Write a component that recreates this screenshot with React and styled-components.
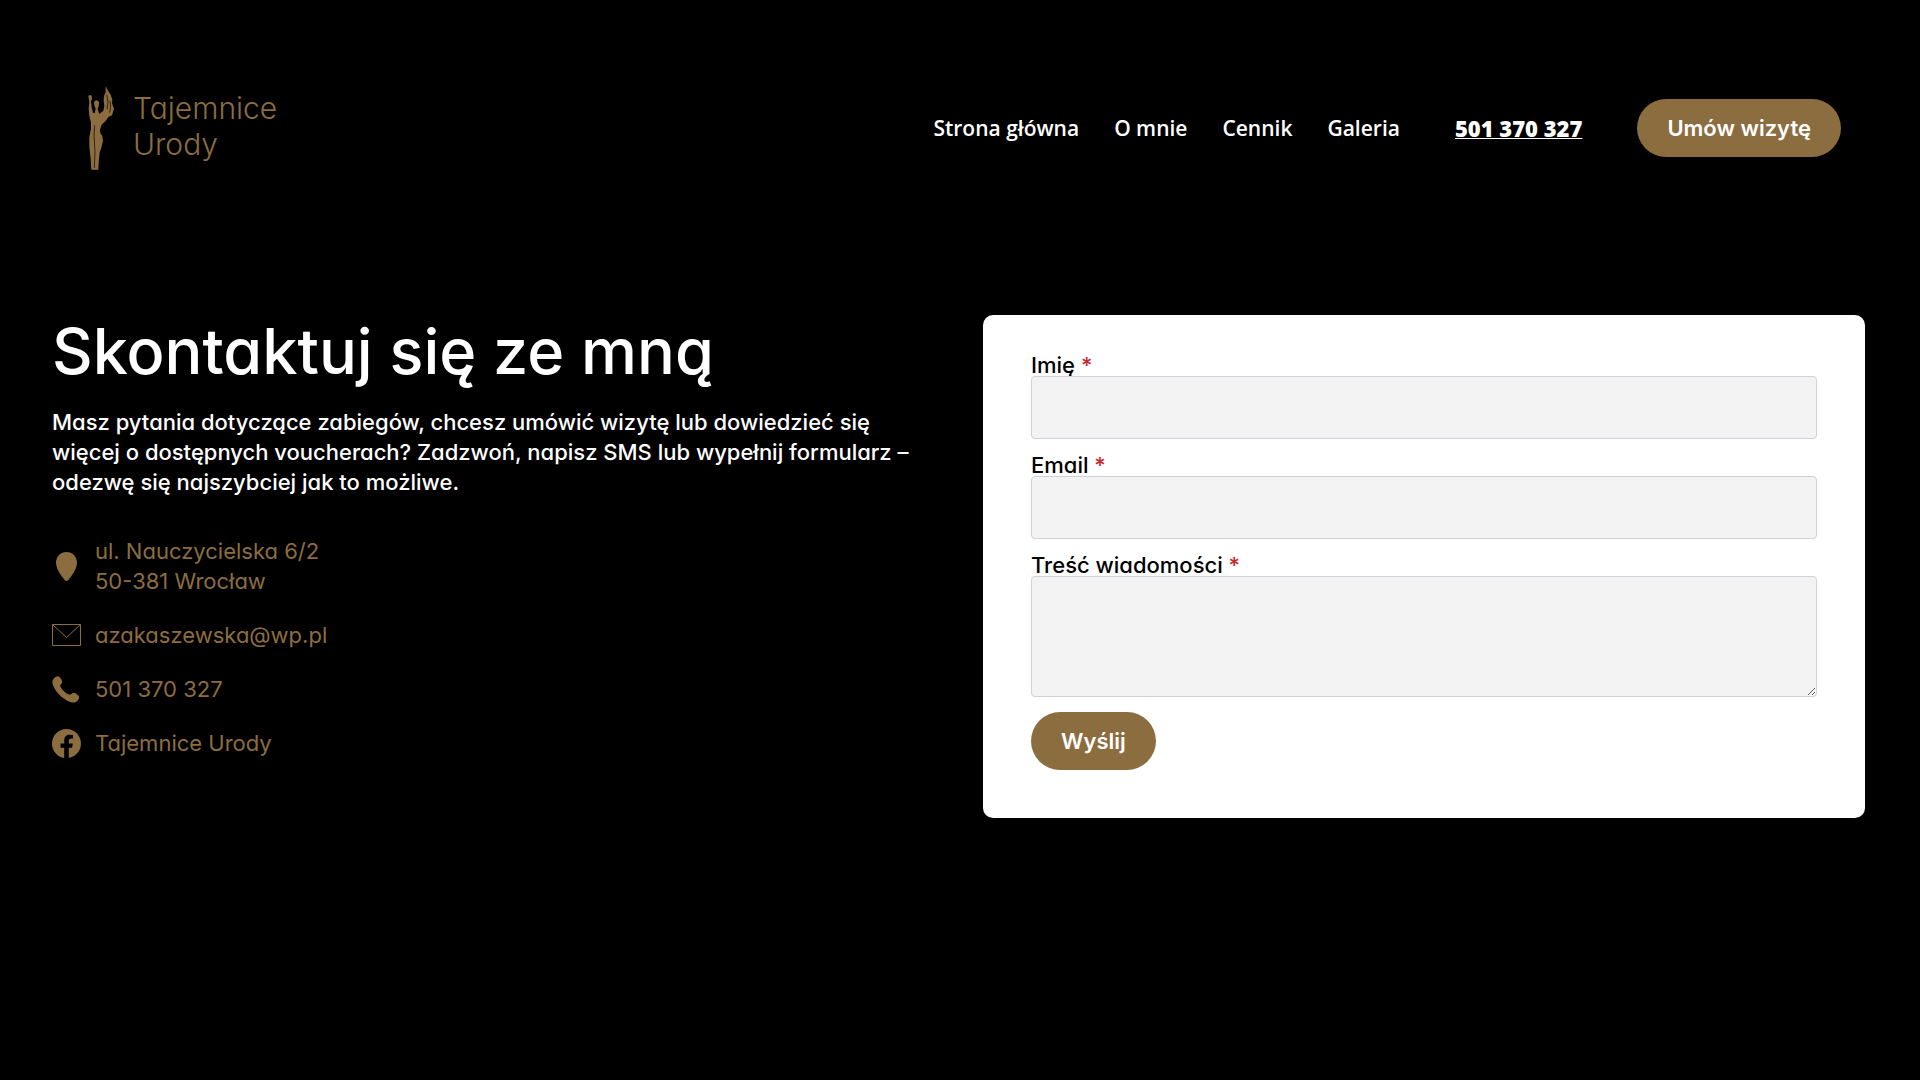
import React from 'react';
import styled, { createGlobalStyle } from 'styled-components';
import { BsFacebook } from 'react-icons/bs';

const navLinks = [
    { name: 'Strona główna', to: '#home' },
    { name: 'O mnie', to: '#about' },
    { name: 'Cennik', to: '#prices' },
    { name: 'Galeria', to: '#gallery' },
];

function Logo () {
    return (
        <LogoLink href="#home">
            <svg width="28" height="86" viewBox="21 15 84 258" fill="currentColor" aria-hidden="true">
                <path d="M25 48Q30 42 35 48L36 56L33 64L35 82L39 98L44 100L47 86L43 76L42 66Q49 56 57 66L56 78L53 88L58 102L70 92L73 78L71 62L72 48L77 36L77 18L84 32L92 44L97 60L96 70L102 86L96 106L86 110L76 124L65 134L60 150L61 160L67 168L69 182L65 200L59 218L56 246L55 269H34L32 236L28 200L28 172L33 146L33 128L28 108L26 84L28 66Z" />
                <path d="M44 136L42 168L45 212L43 264M80 44L84 66L81 88M90 62L92 78L89 98" fill="none" stroke="#000" strokeWidth="2" />
            </svg>
            <LogoText>Tajemnice<br />Urody</LogoText>
        </LogoLink>
    );
}

function PinIcon () {
    return (
        <svg width="29" height="29" viewBox="0 0 29 29" fill="currentColor" aria-hidden="true">
            <path d="M14.500 0C8.500 0 4 4.700 4 10.600C4 17.500 9.500 24 12.600 27.900Q14.500 30 16.400 27.900C19.500 24 25 17.500 25 10.600C25 4.700 20.500 0 14.500 0Z" />
        </svg>
    );
}

function MailIcon () {
    return (
        <svg width="29" height="29" viewBox="0 0 29 29" fill="none" stroke="currentColor" aria-hidden="true">
            <path d="M0.500 3.500H28.500V24.500H0.500ZM0.500 3.500L14.500 16.500L28.500 3.500" />
        </svg>
    );
}

function PhoneIcon () {
    return (
        <svg width="29" height="29" viewBox="0 0 29 29" fill="currentColor" aria-hidden="true">
            <path d="M6 1.200C7.600 1.200 10.300 5 10.200 7C10 8.800 8 9.500 8.200 11C9 14 14.500 19 17.500 19.600C19 19.800 20 17.800 21.600 17.700C23.500 17.800 27.400 20.800 27.200 22.500C26.800 25 24 27.600 21.500 27.600C14 27.500 0.500 15.500 0.400 7C0.400 4 3.500 1.200 6 1.200Z" />
        </svg>
    );
}

function App () {
    return (
        <Page>
            <GlobalStyle />
            <Header>
                <Logo />
                <Nav>
                    <NavList>
                        {
                            navLinks.map((route) => <NavItem key={route.to} href={route.to}>{route.name}</NavItem>)
                        }
                    </NavList>
                    <Phone href="tel:501370327">501 370 327</Phone>
                    <Button type="button">Umów wizytę</Button>
                </Nav>
            </Header>

            <Contact>
                <section>
                    <Title>Skontaktuj się ze mną</Title>
                    <Lead>
                        Masz pytania dotyczące zabiegów, chcesz umówić wizytę lub dowiedzieć się
                        więcej o dostępnych voucherach? Zadzwoń, napisz SMS lub wypełnij formularz –
                        odezwę się najszybciej jak to możliwe.
                    </Lead>
                    <Details>
                        <Detail>
                            <PinIcon />
                            <span>ul. Nauczycielska 6/2<br />50-381 Wrocław</span>
                        </Detail>
                        <Detail>
                            <MailIcon />
                            <DetailLink href="mailto:azakaszewska@wp.pl">azakaszewska@wp.pl</DetailLink>
                        </Detail>
                        <Detail>
                            <PhoneIcon />
                            <DetailLink href="tel:501370327">501 370 327</DetailLink>
                        </Detail>
                        <Detail>
                            <BsFacebook size={29} />
                            <DetailLink href="#facebook">Tajemnice Urody</DetailLink>
                        </Detail>
                    </Details>
                </section>

                <Form>
                    <Field>
                        <Label htmlFor="name">Imię <Required>*</Required></Label>
                        <Input id="name" type="text" />
                    </Field>
                    <Field>
                        <Label htmlFor="email">Email <Required>*</Required></Label>
                        <Input id="email" type="email" />
                    </Field>
                    <Field>
                        <Label htmlFor="message">Treść wiadomości <Required>*</Required></Label>
                        <Message id="message" />
                    </Field>
                    <Button type="submit">Wyślij</Button>
                </Form>
            </Contact>
        </Page>
    );
}

const GlobalStyle = createGlobalStyle`
  * {
    box-sizing: border-box;
  }
  body {
    margin: 0;
    background: #000;
    color: #fff;
    font-family: Inter, "Open Sans", sans-serif;
    font-feature-settings: "cv11";
    font-size: 22px;
    line-height: 30px;
  }
`;
const Page = styled.div`
  min-height: 100vh;
`;
const Header = styled.header`
  display: flex;
  align-items: center;
  justify-content: space-between;
  padding: 85px 79px 0 87px;
`;
const LogoLink = styled.a`
  display: flex;
  align-items: center;
  gap: 18px;
  color: #8c6d3f;
  text-decoration: none;
`;
const LogoText = styled.span`
  padding-bottom: 4px;
  font-size: 30px;
  font-weight: 300;
  line-height: 36px;
`;
const Nav = styled.nav`
  display: flex;
  align-items: center;
  gap: 55px;
`;
const NavList = styled.div`
  display: flex;
  gap: 35px;
`;
const NavItem = styled.a`
  color: #fff;
  font-family: "Open Sans", sans-serif;
  font-size: 21px;
  font-weight: 600;
  text-decoration: none;
`;
const Phone = styled.a`
  color: #fff;
  font-family: "Open Sans", sans-serif;
  font-weight: 800;
  text-decoration-thickness: 1px;
`;
const Button = styled.button`
  height: 58px;
  padding: 0 30px;
  border: 0;
  border-radius: 29px;
  background: #8c6d3f;
  color: #fff;
  font: inherit;
  font-feature-settings: inherit;
  font-weight: 600;
  cursor: pointer;
`;
const Contact = styled.main`
  display: grid;
  grid-template-columns: 1fr 1fr;
  align-items: start;
  gap: 49px;
  padding: 144px 55px 0 52px;
`;
const Title = styled.h1`
  margin: 0 0 20px;
  font-size: 63px;
  font-weight: 500;
  line-height: 72px;
`;
const Lead = styled.p`
  margin: 0 0 39px;
  font-weight: 500;
`;
const Details = styled.div`
  display: flex;
  flex-direction: column;
  gap: 24px;
`;
const Detail = styled.div`
  display: flex;
  align-items: center;
  gap: 14px;
  color: #8c6d3f;
`;
const DetailLink = styled.a`
  color: inherit;
  text-decoration: none;
`;
const Form = styled.form`
  display: flex;
  flex-direction: column;
  align-items: flex-start;
  gap: 15px;
  padding: 39px 48px 48px;
  border-radius: 10px;
  background: #fff;
  color: #000;
`;
const Field = styled.div`
  display: flex;
  flex-direction: column;
  width: 100%;
`;
const Label = styled.label`
  font-weight: 500;
  line-height: 22px;
`;
const Required = styled.span`
  color: #c9252d;
`;
const Input = styled.input`
  height: 63px;
  padding: 0 16px;
  border: 1px solid #cfd0d8;
  border-radius: 4px;
  background: #f3f3f3;
  font: inherit;
`;
const Message = styled.textarea`
  height: 121px;
  padding: 16px;
  border: 1px solid #cfd0d8;
  border-radius: 4px;
  background: #f3f3f3;
  font: inherit;
  resize: vertical;
`;

export default App;
